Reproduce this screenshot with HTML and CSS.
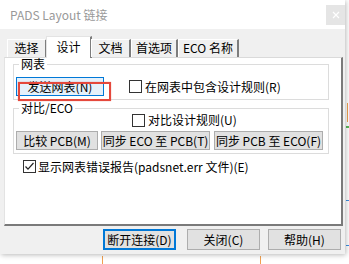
FILE: index.html
```html
<!DOCTYPE html>
<html lang="zh-CN">
<head>
    <meta charset="UTF-8">
    <title>PADS Layout 链接</title>
    <link rel="stylesheet" href="styles.css">
</head>
<body>
    <div class="dialog">
        <div class="titlebar">
            <div class="caption">PADS Layout 链接</div>
            <div class="close">
                <svg width="8" height="8" viewBox="0 0 8 8"><path d="M1 1L7 7M7 1L1 7" stroke="#fff" stroke-width="1.2"/></svg>
            </div>
        </div>

        <div class="tabs">
            <div class="tab">选择</div>
            <div class="tab active">设计</div>
            <div class="tab">文档</div>
            <div class="tab">首选项</div>
            <div class="tab">ECO 名称</div>
        </div>

        <div class="page">
            <fieldset class="group">
                <legend>网表</legend>
                <div class="row">
                    <div class="btn hot">发送网表(N)<span class="mark"></span></div>
                    <div class="check send-rules"><span class="box"></span>在网表中包含设计规则(R)</div>
                </div>
            </fieldset>

            <fieldset class="group second">
                <legend>对比/ECO</legend>
                <div class="check compare-rules"><span class="box"></span>对比设计规则(U)</div>
                <div class="row buttons">
                    <div class="btn compare">比较 PCB(M)</div>
                    <div class="btn sync">同步 ECO 至 PCB(T)</div>
                    <div class="btn sync">同步 PCB 至 ECO(F)</div>
                </div>
            </fieldset>

            <div class="check report">
                <span class="box">
                    <svg width="11" height="11" viewBox="0 0 11 11"><path d="M1.5 5.5L4 8.2L9.5 2" fill="none" stroke="#222" stroke-width="1.2"/></svg>
                </span>显示网表错误报告(padsnet.err 文件)(E)
            </div>
        </div>

        <div class="footer">
            <div class="btn big default">断开连接(D)</div>
            <div class="btn big">关闭(C)</div>
            <div class="btn big">帮助(H)</div>
        </div>
    </div>

    <!-- bits of the layout canvas showing behind the dialog -->
    <div class="deco orange-v" style="left: 347px; top: 103px; height: 19px;"></div>
    <div class="deco green-h" style="left: 346px; top: 126px;"></div>
    <div class="deco blue-h" style="left: 346px; top: 200px;"></div>
    <div class="deco blue-h" style="left: 346px; top: 245px;"></div>
    <div class="deco orange-v" style="left: 102px; top: 256px; height: 8px;"></div>
    <div class="deco orange-v" style="left: 260px; top: 256px; height: 8px;"></div>
</body>
</html>
```

FILE: styles.css
```css
* {
    margin: 0;
    padding: 0;
    box-sizing: border-box;
}

body {
    font-family: "Noto Sans CJK SC", "Noto Sans", sans-serif;
    font-size: 12px;
    color: #000;
    background: #fff;
    width: 349px;
    height: 264px;
    overflow: hidden;
    position: relative;
}

.dialog {
    width: 345px;
    height: 254px;
    background: #f0f0f0;
    box-shadow: 1px 1px 5px rgba(0, 0, 0, 0.28);
    display: flex;
    flex-direction: column;
    position: relative;
    z-index: 1;
}

.titlebar {
    height: 29px;
    background: #fff;
    display: flex;
    align-items: center;
    justify-content: space-between;
    padding-left: 10px;
}

.caption {
    color: #999;
    font-size: 12px;
    line-height: 14px;
}

.close {
    width: 19px;
    height: 20px;
    background: #e5e5e5;
    display: flex;
    align-items: center;
    justify-content: center;
}

/* tab strip */
.tabs {
    display: flex;
    align-items: flex-start;
    height: 21px;
    margin-top: 7px;
    padding-left: 7px;
    position: relative;
    z-index: 2;
}

.tab {
    height: 18px;
    margin-top: 3px;
    min-width: 40px;
    padding: 0 4px;
    line-height: 16px;
    text-align: center;
    white-space: nowrap;
    background: #f0f0f0;
    border-top: 1px solid #fff;
    border-left: 1px solid #fff;
    border-right: 2px solid #7d7d7d;
}

.tab.active {
    height: 22px;
    margin: 0 -1px;
    min-width: 46px;
    line-height: 19px;
    background: #fff;
    border-top: 1px solid #e3e3e3;
    border-left: 1px solid #e3e3e3;
}

/* tab page */
.page {
    margin-left: 4px;
    width: 339px;
    height: 169px;
    background: #fff;
    border-top: 1px solid #dadada;
    border-left: 1px solid #e3e3e3;
    border-right: 2px solid #7a7a7a;
    border-bottom: 2px solid #7a7a7a;
    padding-left: 8px;
}

.group {
    width: 316px;
    border: 1px solid #dcdcdc;
    padding: 7px 0 3px 2px;
    min-width: 0;
}

.group legend {
    margin-left: 3px;
    padding: 0 2px;
    line-height: 12px;
    font-size: 12px;
}

.group.second {
    margin-top: 2px;
    padding-top: 0;
}

.row {
    display: flex;
    align-items: center;
    height: 19px;
}

.btn {
    height: 19px;
    background: #e1e1e1;
    border: 1px solid #adadad;
    display: flex;
    align-items: center;
    justify-content: center;
    white-space: nowrap;
    line-height: 14px;
}

.btn.hot {
    width: 88px;
    background: #e5f1fb;
    border-color: #0078d7;
    position: relative;
}

.mark {
    position: absolute;
    left: 1px;
    top: 4px;
    width: 93px;
    height: 19px;
    border: 2px solid #e5483c;
    box-shadow: 0 0 1px rgba(229, 72, 60, 0.6);
}

.check {
    display: flex;
    align-items: center;
    gap: 3px;
    height: 15px;
    line-height: 14px;
    white-space: nowrap;
}

.box {
    width: 13px;
    height: 13px;
    border: 1px solid #333;
    background: #fff;
    display: flex;
    align-items: center;
    justify-content: center;
    flex-shrink: 0;
}

.send-rules {
    margin-left: 25px;
}

.compare-rules {
    margin-top: -2px;
    height: 16px;
    margin-left: 116px;
}

.buttons {
    margin-top: 3px;
    gap: 3px;
}

.btn.compare {
    width: 82px;
}

.btn.sync {
    width: 109px;
}

.buttons .sync + .sync {
    margin-left: 1px;
}

.report {
    margin-top: 5px;
    margin-left: 10px;
    gap: 2px;
}

/* bottom buttons */
.footer {
    display: flex;
    justify-content: flex-end;
    gap: 8px;
    padding-right: 4px;
    margin-top: 3px;
}

.btn.big {
    width: 73px;
    height: 21px;
}

.btn.default {
    border: 2px solid #0078d7;
    margin-right: 3px;
}

.deco {
    position: absolute;
}

.orange-v {
    width: 1px;
    background: #f0a050;
}

.blue-h {
    width: 3px;
    height: 1px;
    background: #3d8fe0;
}

.green-h {
    width: 3px;
    height: 2px;
    background: #5cb85c;
}
```
